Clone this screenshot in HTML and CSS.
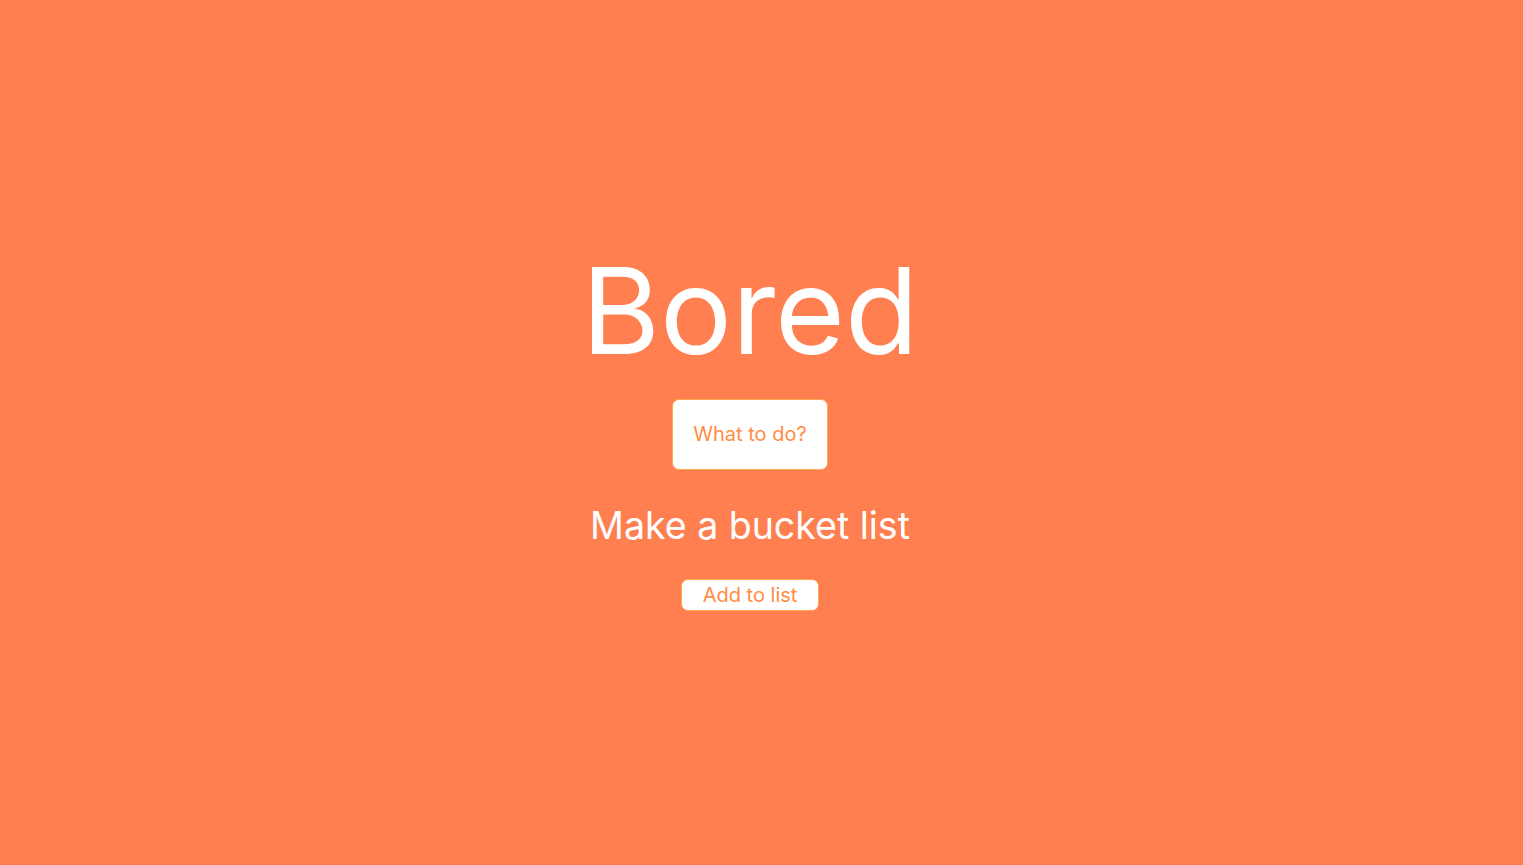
FILE: index.html
```html
<!DOCTYPE html>
<html>
<head>
<meta charset="utf-8">
<link rel="stylesheet" href="styles.css">
</head>
<body>
<main class="page">
  <h1 class="title">Bored</h1>
  <button class="btn btn-big">What to do?</button>
  <p class="activity">Make a bucket list</p>
  <button class="btn btn-small">Add to list</button>
</main>
</body>
</html>
```
FILE: styles.css
```css
html, body {
  margin: 0;
  padding: 0;
  background: #ff7f50;
  font-family: Inter, "Noto Sans", sans-serif;
}
.page {
  width: 1500px;
  height: 865px;
  box-sizing: border-box;
  padding-bottom: 16px;
  display: flex;
  flex-direction: column;
  align-items: center;
  justify-content: center;
}
.title {
  margin: 0;
  font-size: 120px;
  font-weight: 400;
  color: #fff;
  line-height: 1.2;
}
.btn {
  background: #fff;
  color: #ff8c42;
  border: 1px solid #ffa94d;
  font-family: Inter, "Noto Sans", sans-serif;
  font-size: 20px;
  cursor: pointer;
}
.btn-big {
  margin-top: 16px;
  width: 156px;
  height: 71px;
  border-radius: 7px;
}
.activity {
  margin: 33px 0 0;
  font-size: 37.5px;
  color: #fff;
  line-height: 1.2;
}
.btn-small {
  margin-top: 31px;
  width: 138px;
  height: 32px;
  border-radius: 7px;
  padding: 0;
}
```
